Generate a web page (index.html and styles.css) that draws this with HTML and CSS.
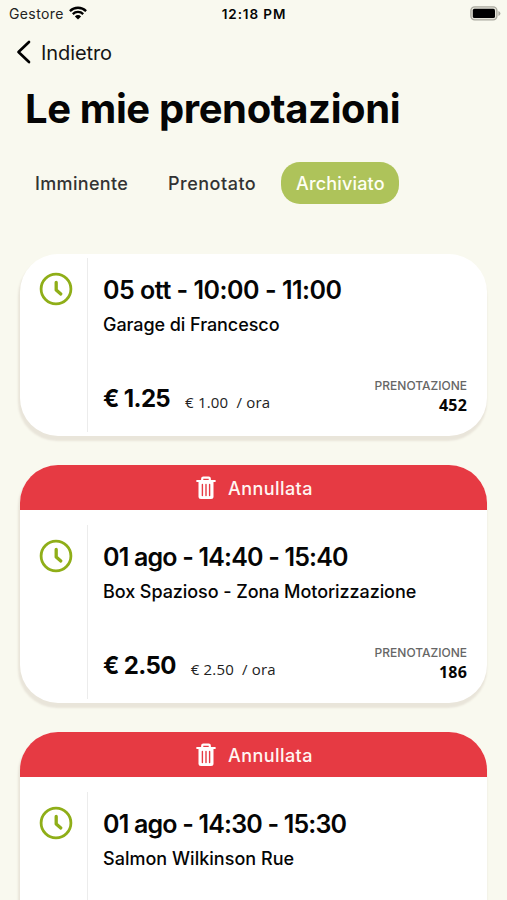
FILE: index.html
```html
<!DOCTYPE html>
<html lang="it">
<head>
<meta charset="utf-8">
<title>Le mie prenotazioni</title>
<link rel="stylesheet" href="styles.css">
</head>
<body>
<svg class="defs" width="0" height="0">
  <symbol id="clock" viewBox="0 0 34 34"><circle cx="17" cy="17" r="14.9" fill="none" stroke="#8fae18" stroke-width="2.8"/><path d="M17.2 10.500V18l4.600 4" fill="none" stroke="#8fae18" stroke-width="3.300" stroke-linecap="round" stroke-linejoin="round"/></symbol>
  <symbol id="trash" viewBox="0 0 20 24"><path d="M1.200 5h17.600M6.200 4.500V2.700Q6.200 1.600 7.300 1.600h5.400q1.100 0 1.100 1.100v1.800" fill="none" stroke="#fff" stroke-width="2.200" stroke-linecap="round"/><path d="M2.500 5h15v15.500q0 2.500-2.500 2.500H5q-2.500 0-2.500-2.500z" fill="#fff"/><path d="M6.400 8.500v11M10 8.500v11M13.600 8.500v11" stroke="#e63a43" stroke-width="1.400" stroke-linecap="round"/></symbol>
</svg>
<header class="status">
  <div class="carrier"><span>Gestore</span>
    <svg width="18" height="14" viewBox="0 0 18 14" fill="none" stroke="#000" stroke-width="2.300"><path d="M.9 5.100a11.500 11.500 0 0 1 16.200 0M3.800 8.100a7.400 7.400 0 0 1 10.400 0"/><path d="M9 13.500 5.900 10.400a4.400 4.400 0 0 1 6.200 0z" fill="#000" stroke="none"/></svg>
  </div>
  <time class="time">12:18 PM</time>
  <svg class="battery" width="31" height="15" viewBox="0 0 31 15"><rect x=".9" y=".9" width="26" height="13" rx="3.800" fill="#e6e5da" stroke="#aaa99f" stroke-width="1.400"/><rect x="2.800" y="2.800" width="22.200" height="9.200" rx="1.600"/><path d="M28.400 5q2 .8 2 2.500t-2 2.500z" fill="#aaa99f"/></svg>
</header>
<nav class="back">
  <svg width="16" height="24" viewBox="0 0 16 24"><path d="M13 2 2.500 12 13 22" fill="none" stroke="#000" stroke-width="2.700" stroke-linecap="round" stroke-linejoin="round"/></svg>
  <span>Indietro</span>
</nav>
<h1>Le mie prenotazioni</h1>
<div class="tabs"><span class="tab first">Imminente</span><span class="tab second">Prenotato</span><span class="tab active">Archiviato</span></div>
<main class="list">
  <article class="card">
    <div class="body">
      <div class="side"><svg class="clock"><use href="#clock"/></svg></div>
      <div class="info">
        <h2 class="ott">05 ott - 10:00 - 11:00</h2>
        <p class="place">Garage di Francesco</p>
        <div class="foot"><span class="price">€ 1.25</span><span class="rate">€ 1.00  / ora</span><div class="booking"><small>PRENOTAZIONE</small><b>452</b></div></div>
      </div>
    </div>
  </article>
  <article class="card">
    <div class="banner"><svg class="trash"><use href="#trash"/></svg><span>Annullata</span></div>
    <div class="body">
      <div class="side"><svg class="clock"><use href="#clock"/></svg></div>
      <div class="info">
        <h2>01 ago - 14:40 - 15:40</h2>
        <p class="place">Box Spazioso - Zona Motorizzazione</p>
        <div class="foot"><span class="price">€ 2.50</span><span class="rate">€ 2.50  / ora</span><div class="booking"><small>PRENOTAZIONE</small><b>186</b></div></div>
      </div>
    </div>
  </article>
  <article class="card">
    <div class="banner"><svg class="trash"><use href="#trash"/></svg><span>Annullata</span></div>
    <div class="body last">
      <div class="side"><svg class="clock"><use href="#clock"/></svg></div>
      <div class="info">
        <h2>01 ago - 14:30 - 15:30</h2>
        <p class="place wilkinson">Salmon Wilkinson Rue</p>
      </div>
    </div>
  </article>
</main>
</body>
</html>
```
FILE: styles.css
```css
* { box-sizing: border-box; }
body {
  margin: 0;
  height: 900px;
  overflow: hidden;
  background: #f9f9ef;
  color: #050505;
  font-family: Inter, sans-serif;
  white-space: nowrap;
}
h1, h2, p { margin: 0; }
svg { display: block; flex: none; }
.defs { position: absolute; }
.status {
  display: grid;
  grid-template-columns: 1fr auto 1fr;
  align-items: center;
  height: 28px;
  padding: 0 6px 0 9px;
}
.carrier { display: flex; align-items: center; gap: 5px; font-size: 14px; letter-spacing: .38px; color: #222; }
.carrier span { margin-top: -1px; }
.carrier svg { margin-top: -3px; }
.time { font-size: 13.5px; font-weight: 600; letter-spacing: .9px; margin-right: 2px; }
.battery { justify-self: end; margin-top: -2px; }
.back { display: flex; align-items: center; gap: 9px; height: 48px; padding-left: 16px; font-size: 20px; letter-spacing: -.1px; color: #151515; }
.back span { padding-top: 1px; }
h1 { height: 66px; padding-left: 25px; font-size: 40px; line-height: 66px; font-weight: 700; letter-spacing: -.38px; }
.tabs { display: flex; margin: 20px 0 0 20px; height: 43px; line-height: 44px; font-size: 18px; font-weight: 500; color: #333; }
.tab { padding-left: 15px; }
.first { width: 133px; letter-spacing: .34px; }
.second { width: 128px; letter-spacing: .5px; }
.active { width: 118px; height: 42px; border-radius: 19px; background: #aec35a; color: #fffff4; letter-spacing: .17px; }
.list { display: flex; flex-direction: column; gap: 29px; margin: 49px 20px 0; }
.card { border-radius: 38px; background: #fff; overflow: hidden; box-shadow: -1px 4px 2px 1px #e9e5da; }
.card:last-child { border-radius: 38px 38px 0 0; }
.banner { display: flex; align-items: center; justify-content: center; gap: 12px; height: 45px; padding: 1px 0 0 2px; background: #e63a43; color: #fff5f2; font-size: 18px; font-weight: 500; letter-spacing: .42px; }
.trash { width: 20px; height: 24px; }
.body { display: flex; height: 182px; padding: 4px 20px 4px 0; }
.banner + .body { padding-top: 15px; height: 193px; }
.banner + .last { height: 123px; padding-bottom: 0; }
.side { width: 68px; padding: 14px 0 0 19px; border-right: 1px solid #ececec; }
.clock { width: 34px; height: 34px; }
.info { flex: 1; display: flex; flex-direction: column; padding: 13px 0 17px 15px; }
h2 { font-size: 25px; line-height: 38px; font-weight: 600; letter-spacing: -.82px; }
.ott { letter-spacing: -.48px; }
.place { margin-top: 1px; font-size: 18px; line-height: 30px; font-weight: 500; letter-spacing: -.07px; }
.wilkinson { letter-spacing: .02px; }
.foot { display: flex; align-items: flex-end; margin-top: auto; }
.price { font-size: 24px; line-height: 32px; font-weight: 700; letter-spacing: -.65px; }
.rate { margin-left: 15px; font: 400 15px/25px "Open Sans", sans-serif; letter-spacing: .18px; white-space: pre; color: #222; }
.booking { margin-left: auto; display: flex; flex-direction: column; align-items: flex-end; }
.booking small { font-size: 12px; line-height: 18px; font-weight: 500; color: #666; }
.booking b { font: 700 16px/20px "Open Sans", sans-serif; letter-spacing: .2px; }
```
